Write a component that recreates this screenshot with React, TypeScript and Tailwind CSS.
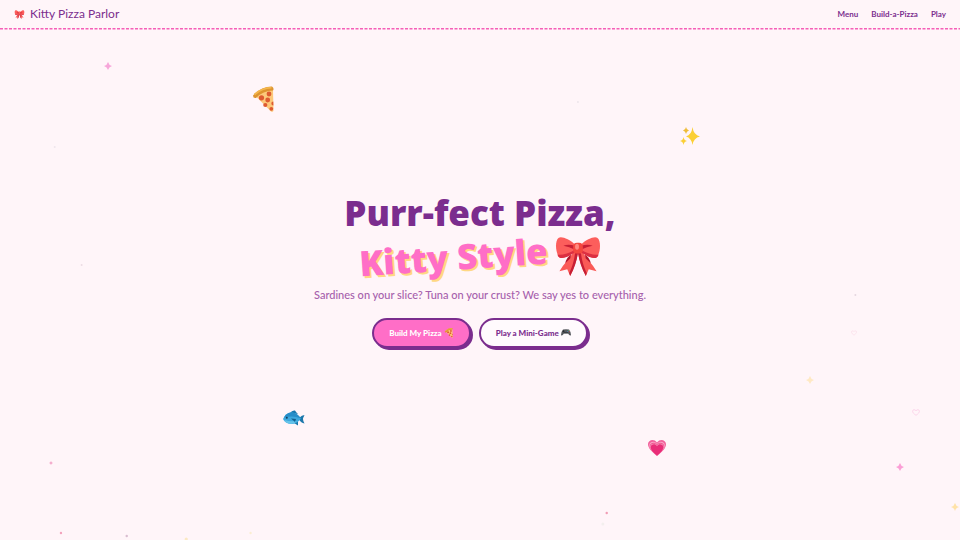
import React from "react";

type ArtProps = { className?: string };

function Bow({ className }: ArtProps) {
  return (
    <svg viewBox="0 0 46 42" className={className} aria-hidden="true">
      <path d="M18 17 C15 22 9 28 4 36 L12 34 L15 41 C19 33 22 24 23 17Z" fill="#fa5a57" />
      <path d="M28 17 C31 22 37 28 42 36 L34 34 L31 41 C27 33 24 24 23 17Z" fill="#fa5a57" />
      <path d="M20 17 C19 27 16 34 14 38 L15 41 C20 32 22 24 23 17Z" fill="#c71f35" />
      <path d="M26 17 C27 27 30 34 32 38 L31 41 C26 32 24 24 23 17Z" fill="#c71f35" />
      <path d="M16 19 Q11 22 10 28 L15 23Z M30 19 Q35 22 36 28 L31 23Z" fill="#b3162d" />
      <path d="M20 9 C14 3 6 0 3 2 C-1 5 0 18 4 22 C8 24 16 19 20 16Z" fill="#fc5e5c" />
      <path d="M26 9 C32 3 40 0 43 2 C47 5 46 18 42 22 C38 24 30 19 26 16Z" fill="#fc5e5c" />
      <path d="M2 19 C6 20 13 18 20 14 L20 17 C13 21 7 24 4 22 Q2 21 2 19Z" fill="#dc2f42" />
      <path d="M44 19 C40 20 33 18 26 14 L26 17 C33 21 39 24 42 22 Q44 21 44 19Z" fill="#dc2f42" />
      <path d="M20 10 Q13 8 8 10 Q14 11 20 14Z M26 10 Q33 8 38 10 Q32 11 26 14Z" fill="#c71f35" />
      <rect x="18" y="7" width="10" height="11" rx="4" fill="#f4473f" />
      <ellipse cx="22" cy="11" rx="2" ry="3" fill="#ff8a80" />
    </svg>
  );
}

function PizzaSlice({ className }: ArtProps) {
  return (
    <svg viewBox="0 0 22 26" className={className} aria-hidden="true">
      <path d="M2 9 Q11 3 20 3 L20.500 24 Q20 26 18 25Z" fill="#fcc87a" />
      <path d="M0 9 Q8 0 19 0 Q21.500 2 20 4 Q10 4 3 11.500 Q0 12 0 9Z" fill="#dd9430" />
      <path d="M1.500 8 Q9 1.500 18.500 1.200" fill="none" stroke="#f3b54c" strokeWidth="1.800" />
      <g fill="#de5a30">
        <circle cx="16" cy="7.500" r="2.400" />
        <circle cx="8.500" cy="11.300" r="2.600" />
        <circle cx="14.700" cy="13.500" r="2.400" />
        <circle cx="12.300" cy="18.500" r="2.100" />
        <path d="M20.300 15 A2 2 0 0 0 20.400 19Z" />
        <circle cx="18.300" cy="22.300" r="1.900" />
      </g>
    </svg>
  );
}

function Sparkles({ className }: ArtProps) {
  return (
    <svg viewBox="0 0 20 20" className={className} aria-hidden="true" fill="#fbcf35">
      <path d="M12.500 1 Q13.500 9 20 10.500 Q13.500 12 12.500 19 Q11.500 12 6 10.500 Q11.500 9 12.500 1Z" />
      <path d="M6 1 Q6.500 4 9 4.500 Q6.500 5 6 8 Q5.500 5 3 4.500 Q5.500 4 6 1Z" fill="#efbd3a" />
      <path d="M3.500 11 Q4 14.500 7 15 Q4 15.500 3.500 19 Q3 15.500 0 15 Q3 14.500 3.500 11Z" />
    </svg>
  );
}

function Fish({ className }: ArtProps) {
  return (
    <svg viewBox="0 0 22 16" className={className} aria-hidden="true">
      <path d="M7 3 Q9 0 12 0.500 Q13 2 15 4Z" fill="#1878ae" />
      <path d="M11 13 L15 15.500 L15 11Z" fill="#1878ae" />
      <path d="M16 8 Q19 5 21.500 5 Q20 8 20 9 Q20 11 21.500 13.500 Q18 13 16 9.500Z" fill="#1c77ab" />
      <path d="M0 9 Q3 2 9 2.500 Q14 3 18 8.500 Q14 14 8 14 Q2 13.500 0 9Z" fill="#3da8dd" />
      <path d="M1 7.500 Q4 2 9 2.500 Q14 3 18 8.500 Q10 5 1 7.500Z" fill="#268dc8" />
      <path d="M1 10 Q7 12 14 11 Q10 14 8 14 Q3 13.500 1 10Z" fill="#66c4ea" />
      <path d="M8 8.500 L13 9 L12 12Z" fill="#12608f" />
      <circle cx="3.800" cy="7.800" r="1" fill="#123f60" />
    </svg>
  );
}

function GrowingHeart({ className }: ArtProps) {
  const heart = "M9 17 C3 12 0 9 0 5 C0 1 6 -1 9 3.500 C12 -1 18 1 18 5 C18 9 15 12 9 17Z";
  return (
    <svg viewBox="0 0 18 17" className={className} aria-hidden="true">
      <path d={heart} fill="#f2609b" />
      <path d={heart} fill="#f9a3c6" transform="translate(1.200 2) scale(.87)" />
      <path d={heart} fill="#f0558f" transform="translate(1.800 3) scale(.8)" />
      <path d={heart} fill="#f7a0c2" transform="translate(2.300 4) scale(.74)" />
      <path d={heart} fill="#e92d78" transform="translate(2.700 4.700) scale(.7)" />
    </svg>
  );
}

function Gamepad({ className }: ArtProps) {
  return (
    <svg viewBox="0 0 20 14" className={className} aria-hidden="true">
      <path d="M4 1 Q10 0 16 1 Q19 4 20 12 Q18 15 14 9 L6 9 Q2 15 0 12 Q1 4 4 1Z" fill="#56595e" />
      <path d="M3 4.500h4M5 2.500v4" stroke="#23262a" strokeWidth="1.500" />
      <circle cx="15" cy="3" r="1" fill="#4fa866" />
      <circle cx="13.500" cy="5" r="1" fill="#4a8fd0" />
      <circle cx="16.500" cy="5" r="1" fill="#d65555" />
      <circle cx="8" cy="7.500" r="1.500" fill="#292c30" />
      <circle cx="12" cy="7.500" r="1.500" fill="#292c30" />
    </svg>
  );
}

function Star({ className }: ArtProps) {
  return (
    <svg viewBox="0 0 8 8" className={className} aria-hidden="true" fill="currentColor">
      <path d="M4 0 Q4.800 3.200 8 4 Q4.800 4.800 4 8 Q3.200 4.800 0 4 Q3.200 3.200 4 0Z" />
    </svg>
  );
}

function HeartOutline({ className }: ArtProps) {
  return (
    <svg viewBox="0 0 8 7" className={className} aria-hidden="true" fill="none" stroke="currentColor">
      <path d="M4 6.300 C2 5 .6 3.600 .6 2.200 C.6 .4 3 .2 4 1.800 C5 .2 7.400 .4 7.400 2.200 C7.400 3.600 6 5 4 6.300Z" />
    </svg>
  );
}

function Specks() {
  return (
    <svg className="size-full">
      <circle cx="6.350%" cy="533" r="1.200" fill="#f3a3bd" />
      <circle cx="13.200%" cy="536" r="1.200" fill="#d9bdd0" />
      <circle cx="63.200%" cy="513" r="1.200" fill="#f19db5" />
      <circle cx="19.400%" cy="539" r="1.600" fill="#fbe9c4" />
      <circle cx="26.100%" cy="533" r="1.200" fill="#fbeed2" />
      <circle cx="62.800%" cy="524" r="1.500" fill="#f3efee" />
      <circle cx="89.100%" cy="295" r="1" fill="#e5d6e0" />
      <circle cx="60.200%" cy="102" r="1" fill="#eee6ec" />
      <circle cx="5.700%" cy="147" r="1" fill="#efe6ec" />
      <circle cx="8.500%" cy="265" r="1" fill="#ecdce4" />
    </svg>
  );
}

function Confetti() {
  return (
    <div className="pointer-events-none absolute inset-0 overflow-hidden" aria-hidden="true">
      <Specks />
      <PizzaSlice className="absolute left-[26.4%] top-[86px] h-[27px] w-[22px]" />
      <Sparkles className="absolute left-[70.8%] top-[126px] size-5" />
      <Fish className="absolute left-[29.5%] top-[410px] h-4 w-[22px]" />
      <GrowingHeart className="absolute left-[67.5%] top-[439px] h-[17px] w-[18px]" />
      <Star className="absolute left-[10.8%] top-[62px] size-2 text-[#f7a6da]" />
      <Star className="absolute left-[93.3%] top-[463px] size-2 text-[#fb9fd6]" />
      <Star className="absolute left-[5.1%] top-[461px] size-1 text-[#f3a5c8]" />
      <Star className="absolute left-[84%] top-[376px] size-2 text-[#ffe9c4]" />
      <Star className="absolute left-[99.1%] top-[503px] size-2 text-[#ffe2a8]" />
      <HeartOutline className="absolute left-[95%] top-[409px] h-[7px] w-2 text-[#fbd5ea]" />
      <HeartOutline className="absolute left-[88.6%] top-[330px] h-[6px] w-[6px] text-[#fbdfea]" />
    </div>
  );
}

export default function App() {
  return (
    <div className="relative flex min-h-screen flex-col bg-[#fff5f9] font-['Lato','Noto_Sans',sans-serif] text-[#7b2d8e]">
      <Confetti />
      <header className="relative">
        <nav className="flex h-7 items-center justify-between px-[14px]">
          <a href="#top" className="flex items-center gap-[5px] text-[12px] leading-4">
            <Bow className="h-[9px] w-[11px]" />
            Kitty Pizza Parlor
          </a>
          <div className="flex items-center gap-[13px] text-[8px] font-bold leading-3">
            <a href="#menu">Menu</a>
            <a href="#build">Build-a-Pizza</a>
            <a href="#play">Play</a>
          </div>
        </nav>
        <svg className="block h-[2px] w-full" aria-hidden="true">
          <g transform="scale(.5)">
            <line x1="0" y1="1.500" x2="200%" y2="1.500" stroke="#f55fb8" strokeWidth="3" strokeDasharray="6 3" />
          </g>
        </svg>
      </header>

      <main className="relative flex flex-1 flex-col items-center justify-center pb-8">
        <h1 className="flex flex-col items-center font-['Open_Sans','Noto_Sans',sans-serif] text-[35px] font-extrabold leading-[44px]">
          <span>Purr-fect Pizza,</span>
          <span className="flex items-center gap-2">
            <span className="-rotate-4 text-[#ff6ec7] [text-shadow:2px_2px_0_#ffd884]">Kitty Style</span>
            <Bow className="h-[41px] w-[46px]" />
          </span>
        </h1>
        <p className="mt-2 text-[11px] font-medium leading-4 text-[#a660ac]">
          Sardines on your slice? Tuna on your crust? We say yes to everything.
        </p>
        <div className="mt-[15px] flex gap-2 text-[8px] font-black leading-3">
          <button
            type="button"
            className="flex h-[30px] items-center gap-[2px] rounded-full border-2 border-[#7b2d8e] bg-[#ff6ec7] px-[15px] text-white shadow-[2px_2px_0_#7b2d8e]"
          >
            Build My Pizza
            <PizzaSlice className="h-[10px] w-[10px]" />
          </button>
          <button
            type="button"
            className="flex h-[30px] items-center gap-[2px] rounded-full border-2 border-[#7b2d8e] bg-[#fffafd] px-[15px] shadow-[2px_2px_0_#7b2d8e]"
          >
            Play a Mini-Game
            <Gamepad className="h-[7px] w-[10px]" />
          </button>
        </div>
      </main>
    </div>
  );
}
